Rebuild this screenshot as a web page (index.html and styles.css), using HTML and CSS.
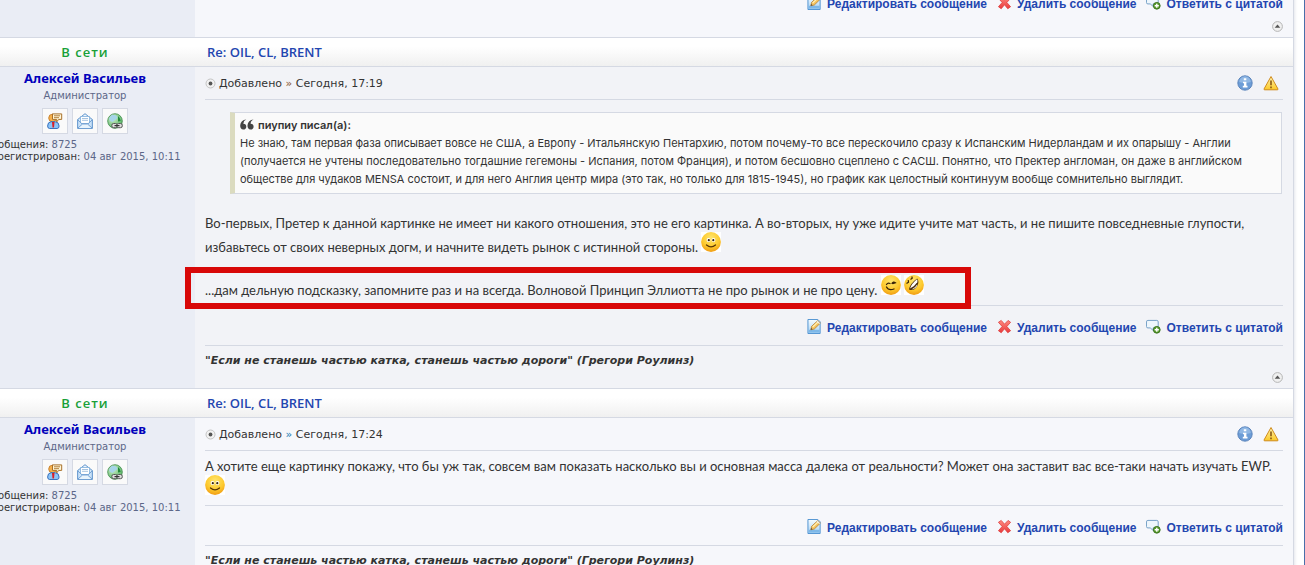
FILE: index.html
```
<!DOCTYPE html>
<html lang="ru">
<head>
  <meta charset="UTF-8" />
  <meta name="viewport" content="width=device-width, initial-scale=1.0"/>
  <title>OIL, CL, BRENT</title>
  <link rel="stylesheet" href="styles.css">
</head>
<body>
  <svg class="sprite" aria-hidden="true">
    <defs>
      <linearGradient id="gBlue" x1="0" y1="0" x2="0" y2="1"><stop offset="0" stop-color="#f4fbff"/><stop offset="1" stop-color="#a9d2f4"/></linearGradient>
      <linearGradient id="gRed" x1="0" y1="0" x2="0" y2="1"><stop offset="0" stop-color="#ff8a80"/><stop offset="1" stop-color="#e83a3c"/></linearGradient>
      <linearGradient id="gWarn" x1="0" y1="0" x2="0" y2="1"><stop offset="0" stop-color="#fff3b0"/><stop offset="1" stop-color="#fbc926"/></linearGradient>
      <radialGradient id="gFace" cx=".5" cy=".3" r=".75"><stop offset="0" stop-color="#ffe670"/><stop offset=".6" stop-color="#fdc92c"/><stop offset="1" stop-color="#ee9410"/></radialGradient>
      <radialGradient id="gGlobe" cx=".35" cy=".3" r=".8"><stop offset="0" stop-color="#d3f3cf"/><stop offset="1" stop-color="#4fae5a"/></radialGradient>
    </defs>
    <symbol id="edit" viewBox="0 0 16 16">
      <path d="M1 .5h10.500l2.500 2.500v12.500h-13z" fill="url(#gBlue)" stroke="#4a8fd0"/>
      <path d="M2 11.500h11.500v3h-11.500z" fill="#7db8e8"/>
      <path d="M4 11.500l1-3.800 6.500-6 2.700 2.700-6.400 6.300z" fill="#f6c35c" stroke="#b07a2c" stroke-width=".8"/>
      <path d="M6 8.500l5.700-5.300" stroke="#fff0b8" stroke-width="1.200"/>
      <path d="M4 11.500l.5-1.800 1.400 1.300z" fill="#444"/>
      <path d="M10.800 2.300l2.700 2.600" stroke="#e9eef4" stroke-width="1.300"/>
    </symbol>
    <symbol id="delete" viewBox="0 0 16 16">
      <path d="M1.500 3.500l3-2 3.500 4 3.800-4 2.700 2-4 4.500 4 4.500-3 2.200-3.500-4.300-3.500 4.300-3-2.200 4-4.500z" fill="url(#gRed)" stroke="#dd3a3a" stroke-width=".8" stroke-linejoin="round"/>
    </symbol>
    <symbol id="reply" viewBox="0 0 16 16">
      <path d="M2 1.500h9.500q1.500 0 1.500 1.500v5q0 1.500-1.500 1.500h-4l.5 3-3.500-3h-2.500q-1.500 0-1.500-1.500v-5q0-1.500 1.500-1.500z" fill="#eef6fc" stroke="#6f9cc4"/>
      <circle cx="11.500" cy="11.500" r="3.600" fill="#5d9e2f" stroke="#37701c"/>
      <path d="M11.500 9.300v4.400M9.300 11.500h4.400" stroke="#fff" stroke-width="1.500"/>
    </symbol>
    <symbol id="info" viewBox="0 0 16 16">
      <circle cx="8" cy="8" r="7.200" fill="#6d9dd6" stroke="#557fb8" stroke-width=".9"/>
      <path d="M2.200 7a5.800 5.800 0 0 1 11.600 0q-6 2-11.600 0z" fill="#91b8e4"/>
      <path d="M6.800 3.300h2.500v2h-2.500zM6 6.700h3.400v4h1.100v1.700h-4.700v-1.700h1.200v-2.400h-1z" fill="#fff"/>
    </symbol>
    <symbol id="warn" viewBox="0 0 16 16">
      <path d="M8 1.500l7 12.500q.2 .8-.7 .8h-12.600q-.9 0-.7-.8z" fill="url(#gWarn)" stroke="#cf8b1c" stroke-linejoin="round"/>
      <path d="M8 5.500v4.700M8 11.500v1.700" stroke="#8a5a14" stroke-width="1.600"/>
    </symbol>
    <symbol id="dot" viewBox="0 0 11 11">
      <circle cx="5.500" cy="5.500" r="4.500" fill="#f2f2f2" stroke="#c4c4c4"/>
      <circle cx="5.500" cy="5.500" r="1.900" fill="#555"/>
    </symbol>
    <symbol id="up" viewBox="0 0 11 11">
      <circle cx="5.500" cy="5.500" r="4.900" fill="#f0f0f0" stroke="#b5b5b5"/>
      <path d="M5.500 3.500l2.800 3.300h-5.600z" fill="#555"/>
    </symbol>
    <symbol id="quote" viewBox="0 0 14 12">
      <path d="M6.300 .5q-2.800 1-3 4.300 3 .2 3 2.900-.2 2.800-3 2.800-3.300-.2-3.100-4.300.5-5 6.100-5.700zM13.600 .5q-2.800 1-3 4.300 3 .2 3 2.900-.2 2.800-3 2.800-3.300-.2-3.100-4.300.5-5 6.100-5.700z" fill="#444"/>
    </symbol>
    <symbol id="profile" viewBox="0 0 16 16">
      <circle cx="5.500" cy="5" r="3.800" fill="#f6b04a" stroke="#bd7420" stroke-width=".8"/>
      <path d="M.6 13q0-4 3.500-4.300h4q4 .3 4 4.300 0 2.500-2 2.500h-7.500q-2 0-2-2.500z" fill="#8cc4f6" stroke="#2c67b8" stroke-width=".9"/>
      <path d="M5 9h2.500l-.5 5.500h-1.500z" fill="#d8202a"/>
      <path d="M5.500 .9h9.200v5.500h-3l-2 2.500v-2.500h-4.200z" fill="#fff7d8" stroke="#a8702a"/>
      <path d="M7 2.800h6M7 4.700h5" stroke="#a8702a" stroke-width=".9"/>
    </symbol>
    <symbol id="mail" viewBox="0 0 16 16">
      <path d="M.7 6.500l7.300-5.800 7.300 5.800v8.800h-14.600z" fill="url(#gBlue)" stroke="#5f93cc"/>
      <path d="M3.500 3.500h9v7h-9z" fill="#fff" stroke="#7faedb" stroke-width=".8"/>
      <path d="M5 5.500h6M5 7.300h6" stroke="#8fb4d8" stroke-width=".8"/>
      <path d="M.7 6.800l4.800 4.500h5l4.800-4.500v8.500h-14.600z" fill="#c9e2f8" stroke="#5f93cc" stroke-width=".8"/>
      <path d="M1 15l4.500-4h5l4.500 4" fill="#e8f4fd" stroke="#5f93cc" stroke-width=".8"/>
    </symbol>
    <symbol id="globe" viewBox="0 0 16 16">
      <circle cx="8" cy="8" r="7.300" fill="url(#gGlobe)" stroke="#3d8a4a" stroke-width=".8"/>
      <path d="M5 1.800q5 0 5.500 3.200-2 1.500-5 4-2.800-.5-3.500-3 1-3 3-4.200z" fill="#a6d5e8"/>
      <path d="M11 3q2.500 2 2.700 5l-2.700 .5z" fill="#238a3c"/>
      <rect x="4.800" y="10.500" width="5.500" height="4.200" rx="1.800" fill="#ddd" stroke="#555"/>
      <rect x="9.800" y="10.500" width="5.500" height="4.200" rx="1.800" fill="#ddd" stroke="#555"/>
      <path d="M7.500 12.600h5" stroke="#333" stroke-width="1.200"/>
    </symbol>
    <symbol id="smile" viewBox="0 0 20 20">
      <rect width="20" height="20" fill="#fff"/>
      <circle cx="10" cy="10" r="9.900" fill="url(#gFace)"/>
      <ellipse cx="7.500" cy="8" rx="1.900" ry="2.100" fill="#fff"/><ellipse cx="12.500" cy="8" rx="1.900" ry="2.100" fill="#fff"/>
      <circle cx="7.800" cy="8.200" r="1.100" fill="#3a2408"/><circle cx="12.300" cy="8.200" r="1.100" fill="#3a2408"/>
      <path d="M5.500 13q4.500 3.600 9 0" fill="none" stroke="#5a3505" stroke-width="1.300" stroke-linecap="round"/>
    </symbol>
    <symbol id="wink" viewBox="0 0 20 20">
      <rect width="20" height="20" fill="#fff"/>
      <circle cx="10" cy="10" r="9.900" fill="url(#gFace)"/>
      <path d="M5.500 9.500q1.300-2 3.500-1M11 8.300q1.500-2 3.300-.5l-2.500 .7M5.500 12q2 4 7.500 2" fill="none" stroke="#3a2408" stroke-width="1.300" stroke-linecap="round"/>
    </symbol>
    <symbol id="rofl" viewBox="0 0 20 20">
      <rect width="20" height="20" fill="#fff"/>
      <circle cx="10" cy="10" r="9.900" fill="url(#gFace)"/>
      <path d="M5 14.500q1-6 8.200-11 2.500 3.500-.2 8-3.500 5-8 3z" fill="#4a2c0a"/>
      <path d="M6 13.500q1.500-5 7-9.300 1 1.500 .3 3-3 4.500-7.300 6.300z" fill="#fff"/>
      <path d="M7.500 14.500q3.500-1.500 5.800-5.300.3 3.800-5.800 5.300z" fill="#e8e8e8"/>
      <path d="M2.500 8.500l2-1.300-.3-2M6.500 4.500l1.700-1.200-.3-1.800" fill="none" stroke="#3a2408" stroke-width="1.200"/>
    </symbol>
  </svg>

  <main class="page">
    <article class="post bg1">
      <div class="author"></div>
      <div class="content">
        <div class="actions">
          <a href="#"><svg><use href="#edit"/></svg>Редактировать сообщение</a>
          <a href="#"><svg><use href="#delete"/></svg>Удалить сообщение</a>
          <a href="#"><svg><use href="#reply"/></svg>Ответить с цитатой</a>
        </div>
        <a class="top" href="#" aria-label="Вернуться к началу"><svg><use href="#up"/></svg></a>
      </div>
    </article>

    <article class="post bg2">
      <div class="online">В сети</div>
      <h3 class="subject"><a href="#">Re: OIL, CL, BRENT</a></h3>
      <div class="author">
        <a class="name" href="#">Алексей Васильев</a>
        <div class="rank">Администратор</div>
        <div class="contacts">
          <a href="#" aria-label="Профиль"><svg><use href="#profile"/></svg></a>
          <a href="#" aria-label="Почта"><svg><use href="#mail"/></svg></a>
          <a href="#" aria-label="Сайт"><svg><use href="#globe"/></svg></a>
        </div>
        <div class="details"><b>Сообщения:</b> 8725<br><b>Зарегистрирован:</b> 04 авг 2015, 10:11</div>
      </div>
      <div class="content">
        <div class="meta">
          <svg class="dot"><use href="#dot"/></svg>
          <span>Добавлено <a class="arrow visited" href="#">»</a> Сегодня, 17:19</span>
          <a class="tool" href="#" aria-label="Информация"><svg><use href="#info"/></svg></a>
          <a class="tool" href="#" aria-label="Предупреждение"><svg><use href="#warn"/></svg></a>
        </div>
        <div class="text">
          <blockquote>
            <cite><svg><use href="#quote"/></svg>пиупиу писал(а):</cite>
            Не знаю, там первая фаза описывает вовсе не США, а Европу - Итальянскую Пентархию, потом почему-то все перескочило сразу к Испанским Нидерландам и их опарышу - Англии<br>
            (получается не учтены последовательно тогдашние гегемоны - Испания, потом Франция), и потом бесшовно сцеплено с САСШ. Понятно, что Пректер англоман, он даже в английском<br>
            обществе для чудаков MENSA состоит, и для него Англия центр мира (это так, но только для 1815-1945), но график как целостный континуум вообще сомнительно выглядит.
          </blockquote>
          <p>Во-первых, Претер к данной картинке не имеет ни какого отношения, это не его картинка. А во-вторых, ну уже идите учите мат часть, и не пишите повседневные глупости,<br>
          избавьтесь от своих неверных догм, и начните видеть рынок с истинной стороны. <svg class="smiley"><use href="#smile"/></svg></p>
          <p class="marked">...дам дельную подсказку, запомните раз и на всегда. Волновой Принцип Эллиотта не про рынок и не про цену. <svg class="smiley"><use href="#wink"/></svg> <svg class="smiley"><use href="#rofl"/></svg></p>
        </div>
        <div class="actions">
          <a href="#"><svg><use href="#edit"/></svg>Редактировать сообщение</a>
          <a href="#"><svg><use href="#delete"/></svg>Удалить сообщение</a>
          <a href="#"><svg><use href="#reply"/></svg>Ответить с цитатой</a>
        </div>
        <div class="signature">"Если не станешь частью катка, станешь частью дороги" (Грегори Роулинз)</div>
        <a class="top" href="#" aria-label="Вернуться к началу"><svg><use href="#up"/></svg></a>
      </div>
    </article>

    <article class="post bg1">
      <div class="online">В сети</div>
      <h3 class="subject"><a href="#">Re: OIL, CL, BRENT</a></h3>
      <div class="author">
        <a class="name" href="#">Алексей Васильев</a>
        <div class="rank">Администратор</div>
        <div class="contacts">
          <a href="#" aria-label="Профиль"><svg><use href="#profile"/></svg></a>
          <a href="#" aria-label="Почта"><svg><use href="#mail"/></svg></a>
          <a href="#" aria-label="Сайт"><svg><use href="#globe"/></svg></a>
        </div>
        <div class="details"><b>Сообщения:</b> 8725<br><b>Зарегистрирован:</b> 04 авг 2015, 10:11</div>
      </div>
      <div class="content">
        <div class="meta">
          <svg class="dot"><use href="#dot"/></svg>
          <span>Добавлено <a class="arrow" href="#">»</a> Сегодня, 17:24</span>
          <a class="tool" href="#" aria-label="Информация"><svg><use href="#info"/></svg></a>
          <a class="tool" href="#" aria-label="Предупреждение"><svg><use href="#warn"/></svg></a>
        </div>
        <div class="text">
          <p>А хотите еще картинку покажу, что бы уж так, совсем вам показать насколько вы и основная масса далека от реальности? Может она заставит вас все-таки начать изучать EWP.<br>
          <svg class="smiley"><use href="#smile"/></svg></p>
        </div>
        <div class="actions">
          <a href="#"><svg><use href="#edit"/></svg>Редактировать сообщение</a>
          <a href="#"><svg><use href="#delete"/></svg>Удалить сообщение</a>
          <a href="#"><svg><use href="#reply"/></svg>Ответить с цитатой</a>
        </div>
        <div class="signature">"Если не станешь частью катка, станешь частью дороги" (Грегори Роулинз)</div>
        <a class="top" href="#" aria-label="Вернуться к началу"><svg><use href="#up"/></svg></a>
      </div>
    </article>
  </main>
</body>
</html>
```
FILE: styles.css
```
*,
*::after {
  box-sizing: border-box;
}

body {
  margin: 0;
  height: 100vh;
  overflow: hidden;
  background: #fff;
  border-right: 1px solid #4a6ea9;
  font-family: "DejaVu Sans", sans-serif;
  font-size: 11px;
  color: #333;
}

a {
  color: #2346b0;
  text-decoration: none;
}

svg {
  width: 16px;
  height: 16px;
  flex: none;
}

.sprite {
  position: absolute;
  width: 0;
  height: 0;
}

/* the forum table starts a little outside the window */
.page {
  margin: -18px 10px 0 -25px;
  border-right: 1px solid #d5d9e3;
  box-shadow: 1px 0 3px #e4e6ec;
}

.post {
  display: grid;
  grid-template-columns: 220px 1fr;
  border-bottom: 1px solid #d5d9e3;
}

.bg1 .content {
  background: #f6f7fb;
}

.bg2 .content {
  background: #f2f3f7;
}

.online,
.subject {
  height: 29px;
  line-height: 29px;
  border-bottom: 1px solid #d5d9e3;
  background: linear-gradient(#fff 30%, #f0f0f0);
  font-family: "Open Sans", sans-serif;
  font-size: 13px;
  font-weight: 600;
}

.online {
  text-align: center;
  letter-spacing: 1px;
  color: #18a038;
}

.subject {
  margin: 0;
  padding-left: 12px;
}

.author {
  background: #eaedf5;
  padding: 1px 10px;
  text-align: center;
}

.name {
  display: block;
  line-height: 20px;
  font-family: "Noto Sans", sans-serif;
  font-size: 13px;
  font-weight: bold;
  color: #0000bb;
}

.rank {
  font-size: 10px;
  line-height: 16px;
  color: #5c6788;
}

.contacts {
  display: flex;
  justify-content: center;
  gap: 4px;
  margin: 4px 0 5px;
}

.contacts a {
  display: flex;
  padding: 4px;
  border: 1px solid #d5d9e3;
  background: #fafafa;
}

.details {
  text-align: left;
  font-size: 10px;
  line-height: 12px;
  color: #5c6788;
  white-space: nowrap;
}

.details b {
  font-weight: normal;
  color: #333;
}

.content {
  padding: 0 10px;
}

.meta {
  display: flex;
  align-items: center;
  height: 33px;
  border-bottom: 1px solid #d5d9e3;
}

.dot,
.top svg {
  width: 11px;
  height: 11px;
}

.dot {
  margin-right: 3px;
}

.meta span {
  flex: 1;
}

.arrow {
  color: #1f7fb5;
}

.arrow.visited {
  color: #8a5a34;
}

.tool {
  display: flex;
  margin-left: 10px;
}

.tool:last-child {
  margin-right: 4px;
}

.text {
  padding: 6px 0;
  border-bottom: 1px solid #d5d9e3;
  font-family: Lato, sans-serif;
  font-size: 13px;
  line-height: 18px;
}

.text p {
  margin: 0;
}

.text p + p {
  margin-top: 19px;
}

blockquote {
  margin: 6px 1px 20px 25px;
  padding: 3px 5px 5px;
  border: 1px solid #d5d9e3;
  border-left: 5px solid #dbdbbf;
  background: #fafafa;
  font-family: Inter, sans-serif;
  font-size: 11px;
}

cite {
  display: flex;
  align-items: center;
  gap: 4px;
  font-style: normal;
  font-weight: 600;
}

cite svg {
  width: 14px;
  height: 12px;
}

.smiley {
  width: 20px;
  height: 20px;
  vertical-align: baseline;
}

.marked {
  position: relative;
}

/* red frame drawn over the line */
.marked::after {
  content: "";
  position: absolute;
  top: -8px;
  left: -20px;
  width: 786px;
  height: 42px;
  border: 6px solid #d80808;
}

.actions {
  display: flex;
  justify-content: flex-end;
  gap: 10px;
  padding: 13px 0 8px;
  font-family: "Liberation Sans", sans-serif;
  font-size: 12px;
  font-weight: bold;
  line-height: 18px;
}

.actions a {
  display: flex;
  gap: 5px;
}

.actions svg {
  width: 15px;
  height: 15px;
}

.signature {
  padding: 8px 0 4px;
  border-top: 1px solid #d5d9e3;
  font-weight: bold;
  font-style: italic;
  line-height: 14px;
}

.top {
  display: flex;
  justify-content: flex-end;
  padding: 0 0 5px;
}
```
